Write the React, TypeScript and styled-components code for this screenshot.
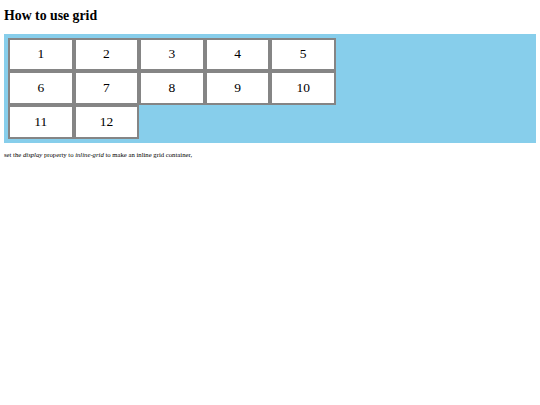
import React from "react";
import styled, { createGlobalStyle } from "styled-components";

const GlobalStyle = createGlobalStyle`
  html, body {
    margin: 0;
    padding: 0;
    background: #ffffff;
  }
  body {
    font-family: "Liberation Serif", "Times New Roman", serif;
    color: #000;
  }
`;

const Page = styled.div`
  padding: 4px 4px 0 4px;
`;

const Title = styled.h2`
  margin: 4px 0 10px 0;
  font-size: 13.8px;
  font-weight: bold;
  line-height: 15.5px;
`;

const GridContainer = styled.div`
  display: grid;
  grid-template-columns: repeat(5, 65.6px);
  background-color: #87ceeb;
  padding: 4px;
`;

const GridItem = styled.div`
  background-color: #ffffff;
  border: 2px solid #858585;
  box-sizing: border-box;
  height: 33.7px;
  display: flex;
  align-items: center;
  justify-content: center;
  font-size: 13.5px;
`;

const Note = styled.p`
  margin: 8px 0;
  font-size: 6.7px;
  line-height: 8px;
`;

const items = Array.from({ length: 12 }, (_, i) => i + 1);

export default function App() {
  return (
    <>
      <GlobalStyle />
      <Page>
        <Title>How to use grid</Title>
        <GridContainer>
          {items.map((n) => (
            <GridItem key={n}>{n}</GridItem>
          ))}
        </GridContainer>
        <Note>
          set the <em>display</em> property to <em>inline-grid</em> to make an
          inline grid container,
        </Note>
      </Page>
    </>
  );
}
